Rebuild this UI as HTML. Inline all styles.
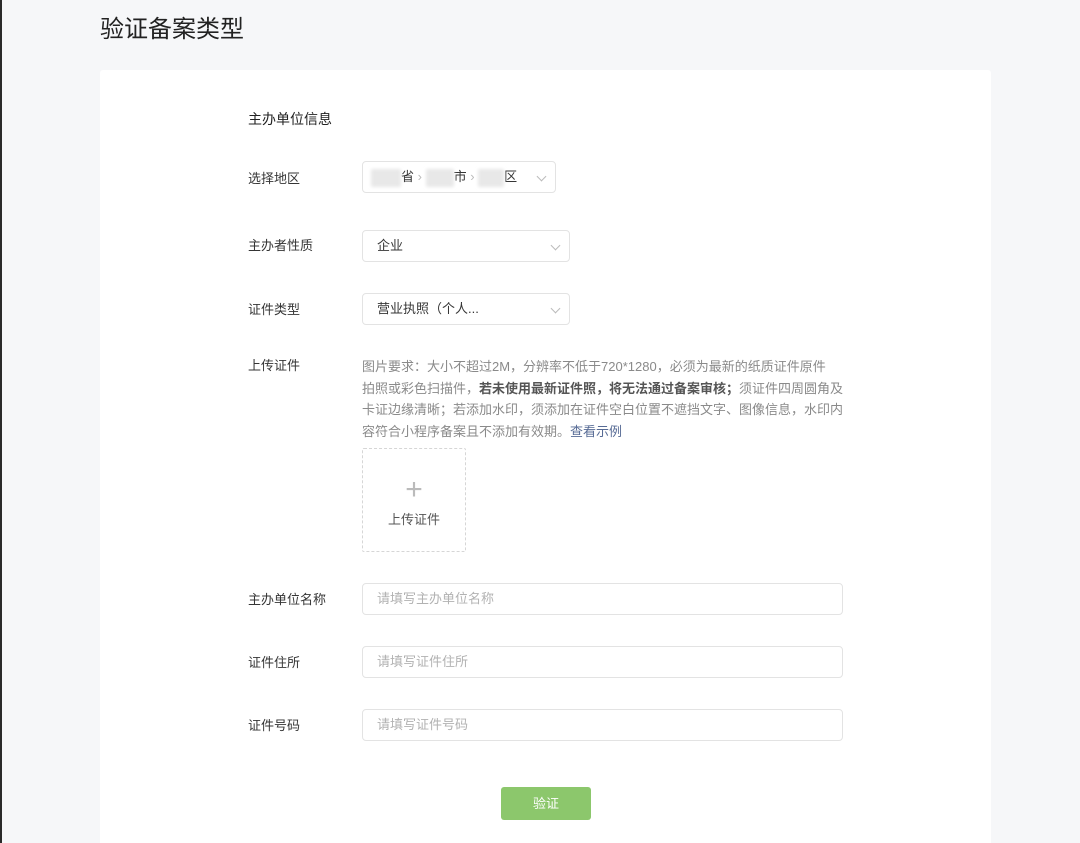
<!DOCTYPE html>
<html><head><meta charset="utf-8"><style>
*{box-sizing:border-box;margin:0;padding:0}
html,body{width:1080px;height:843px;overflow:hidden}
body{background:#f6f7f9;position:relative;font-family:"Liberation Sans","Noto Sans CJK SC",sans-serif;color:#353535}
.edge{position:absolute;left:0;top:0;width:2px;height:843px;background:#2a2a2a}
h1{position:absolute;left:100px;top:14px;font-size:24px;font-weight:normal;color:#222;line-height:32px}
.card{position:absolute;left:100px;top:70px;width:891px;height:773px;background:#fff;border-radius:3px 3px 0 0}
.lbl{position:absolute;left:248px;font-size:13px;line-height:18px;color:#353535}
.box{position:absolute;left:362px;height:32px;border:1px solid #e3e3e3;border-radius:4px;background:#fff;font-size:13px;line-height:30px;padding-left:14px;color:#353535}
.ph{color:#b2b2b2}
.chev{position:absolute;right:10px;top:11px;width:7px;height:7px;border-right:1px solid #bbb;border-bottom:1px solid #bbb;transform:rotate(45deg)}
.blur{display:inline-block;height:18px;background:#e8e8e8;vertical-align:middle;filter:blur(1.5px);border-radius:2px}
.desc{position:absolute;left:362px;top:356px;width:520px;white-space:nowrap;font-size:13px;line-height:21.5px;color:#8a8a8a}
.desc b{color:#555}
.desc a{color:#576b95;text-decoration:none}
.up{position:absolute;left:362px;top:448px;width:104px;height:104px;border:1px dashed #d6d6d6;border-radius:2px;text-align:center;font-size:13px;color:#555}
.btn{position:absolute;left:501px;top:787px;width:90px;height:33px;background:#8cc76c;border-radius:3px;color:#fff;font-size:13px;text-align:center;line-height:33px}
</style></head><body>
<div class="edge"></div>
<h1>验证备案类型</h1>
<div class="card"></div>
<div class="lbl" style="top:110px;font-size:14px;color:#222">主办单位信息</div>
<div class="lbl" style="top:170px">选择地区</div>
<div class="box" style="top:161px;width:194px;padding-left:8px"><span class="blur" style="width:30px"></span>省<span style="color:#bbb"> › </span><span class="blur" style="width:28px"></span>市<span style="color:#bbb"> › </span><span class="blur" style="width:26px"></span>区<div class="chev"></div></div>
<div class="lbl" style="top:237px">主办者性质</div>
<div class="box" style="top:230px;width:208px">企业<div class="chev"></div></div>
<div class="lbl" style="top:301px">证件类型</div>
<div class="box" style="top:293px;width:208px">营业执照（个人...<div class="chev"></div></div>
<div class="lbl" style="top:357px">上传证件</div>
<div class="desc">图片要求：大小不超过2M，分辨率不低于720*1280，必须为最新的纸质证件原件<br>拍照或彩色扫描件，<b>若未使用最新证件照，将无法通过备案审核；</b>须证件四周圆角及<br>卡证边缘清晰；若添加水印，须添加在证件空白位置不遮挡文字、图像信息，水印内<br>容符合小程序备案且不添加有效期。<a>查看示例</a></div>
<div class="up"><div style="font-size:30px;color:#bbb;line-height:30px;margin-top:26px;font-weight:300">+</div><div style="margin-top:4px">上传证件</div></div>
<div class="lbl" style="top:591px">主办单位名称</div>
<div class="box ph" style="top:583px;width:481px">请填写主办单位名称</div>
<div class="lbl" style="top:654px">证件住所</div>
<div class="box ph" style="top:646px;width:481px">请填写证件住所</div>
<div class="lbl" style="top:717px">证件号码</div>
<div class="box ph" style="top:709px;width:481px">请填写证件号码</div>
<div class="btn">验证</div>
</body></html>
